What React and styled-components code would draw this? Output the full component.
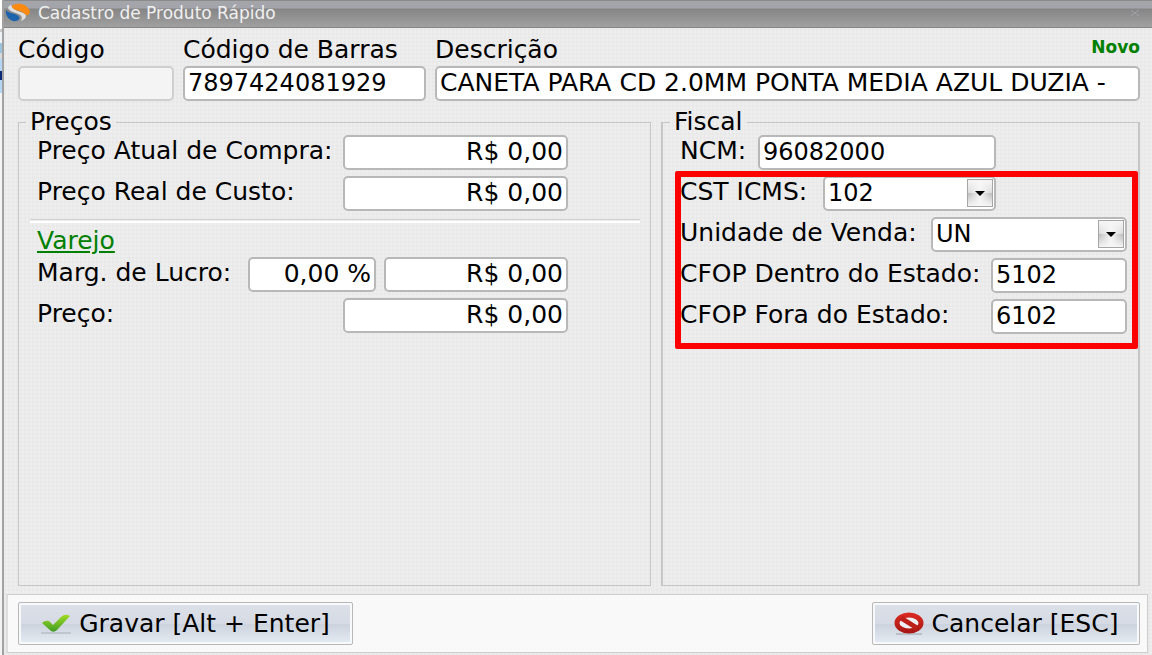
import React from "react";
import styled, { createGlobalStyle } from "styled-components";

const GlobalStyle = createGlobalStyle`
  *, *::before, *::after { box-sizing: border-box; }
  body { margin: 0; background: #ededed; }
  body, input, select, button {
    font-family: "DejaVu Sans", Verdana, sans-serif;
    font-size: 25px;
    line-height: 28px;
    color: #000;
  }
`;

const Desktop = styled.div`
  min-height: 100vh;
  display: flex;
  padding-left: 2px;
  background: linear-gradient(#fff 0 29px, #c8c8c8 29px 32px, #eef2f5 32px 43px, #9cc3dc 43px 53px,
    #d8d8d8 53px 59px, #b5d6f5 59px 71px, #0a2a78 71px 80px, #b5d6f5 80px 93px, #f4f4f4 93px);
`;

const Window = styled.main`
  flex: 1;
  min-width: 0;
  display: flex;
  flex-direction: column;
  border-left: 2px solid #a2a2a2;
  background-color: #eeeeee;
  background-image: repeating-linear-gradient(0deg, rgba(0, 0, 0, 0.012) 0 2px, transparent 2px 4px),
    repeating-linear-gradient(90deg, rgba(0, 0, 0, 0.012) 0 2px, transparent 2px 4px);
`;

const TitleBar = styled.header`
  height: 28px;
  display: flex;
  align-items: center;
  gap: 8px;
  padding: 0 12px 2px 1px;
  border-top: 1px solid #8b8b8b;
  border-bottom: 1px solid #858585;
  background: linear-gradient(#a4a5ab 0 7px, #858585 8px, #a0a0a0);
`;

const Title = styled.h1`
  flex: 1;
  margin: 0;
  font-size: 17px;
  line-height: 20px;
  font-weight: 400;
  color: #f0f0f0;
`;

const CloseButton = styled.button`
  display: flex;
  padding: 0;
  border: 0;
  background: none;
`;

const Form = styled.form`
  flex: 1;
  display: flex;
  flex-direction: column;
`;

const Identification = styled.section`
  display: grid;
  grid-template-columns: 156px 243px 1fr;
  gap: 9px;
  padding: 8px 12px 0 14px;
`;

const Field = styled.div`
  min-width: 0;
  display: flex;
  flex-direction: column;
  gap: 2px;
`;

const FieldHead = styled.div`
  display: flex;
  justify-content: space-between;
`;

const Label = styled.label`
  white-space: nowrap;
`;

const Status = styled.strong`
  font-size: 17px;
  line-height: 22px;
  color: #008000;
`;

const TextBox = styled.input`
  flex: none;
  width: ${(p) => (p.$width ? `${p.$width}px` : "100%")};
  height: 35px;
  padding: 0 3px 2px;
  border: 2px solid #b8b8b8;
  border-radius: 5px;
  background: #fff;
  text-align: ${(p) => p.$align || "left"};
  outline: none;

  &:disabled {
    border-color: #cfcfcf;
    background: #f4f4f4;
  }
`;

const CodeBox = styled(TextBox)`
  font-size: 24px;
`;

const Groups = styled.div`
  flex: 1;
  display: grid;
  grid-template-columns: 633fr 479fr;
  gap: 10px;
  padding: 11px 12px 8px 14px;
`;

const Group = styled.fieldset`
  min-width: 0;
  margin: 0;
  padding: 3px 0 0;
  border: 1px solid #c6c6c6;
  border-right-width: ${(p) => (p.$heavy ? 2 : 1)}px;
  border-left-width: ${(p) => (p.$heavy ? 2 : 1)}px;
`;

const Legend = styled.legend`
  margin-left: 7px;
  padding: 0 4px;
  line-height: 20px;
`;

const Rows = styled.div`
  position: relative;
  display: flex;
  flex-direction: column;
  gap: 6px;
  padding-left: ${(p) => p.$indent}px;
`;

const Row = styled.div`
  width: ${(p) => p.$width}px;
  max-width: 100%;
  display: flex;
  align-items: center;
  justify-content: space-between;

  > ${Label} {
    padding-bottom: 4px;
  }
`;

const Divider = styled.hr`
  height: 4px;
  margin: 8px 10px 5px 11px;
  border: 0;
  border-top: 1px solid #d2d2d2;
  border-bottom: 2px solid #fff;
`;

const Retail = styled.a`
  display: block;
  width: max-content;
  margin: 0 0 3px 18px;
  line-height: 26px;
  color: #008000;
  text-decoration-thickness: 2px;
  text-underline-offset: 2px;
`;

const Highlighted = styled(Rows)`
  margin-top: 6px;

  &::after {
    content: "";
    position: absolute;
    inset: -5px 0 -15px 12px;
    border: 6px solid #fe0000;
    border-radius: 2px;
    pointer-events: none;
  }
`;

const SelectFrame = styled.div`
  position: relative;
  flex: none;
  width: ${(p) => p.$width}px;
`;

const SelectBox = styled.select`
  display: block;
  width: 100%;
  height: 35px;
  padding: 0 32px 2px 3px;
  border: 2px solid #b8b8b8;
  border-radius: 5px;
  background: #fff;
  font-size: 24px;
  appearance: none;
  outline: none;
`;

const DropButton = styled.span`
  position: absolute;
  top: 3px;
  right: 3px;
  width: 26px;
  height: 28px;
  display: grid;
  place-items: center;
  border: 1px solid #a6a6a6;
  background: linear-gradient(90deg, rgba(255, 255, 255, 0), #f6f6f6 50%, rgba(255, 255, 255, 0)),
    linear-gradient(#f6f6f6, #dcdcdc 48%, #bcbcbc 52%, #f4f4f4);
  pointer-events: none;
`;

const Footer = styled.footer`
  display: flex;
  justify-content: space-between;
  margin: 0 4px 2px 2px;
  padding: 7px 7px 7px 10px;
  border: 1px solid #cecece;
  border-left: 2px solid #dedede;
  background: #f9f9f9;
`;

const Action = styled.button`
  width: ${(p) => p.$width}px;
  height: 43px;
  display: flex;
  align-items: center;
  justify-content: center;
  gap: 8px;
  padding: 0;
  border: 1px solid #b8b8b8;
  border-radius: 2px;
  background: linear-gradient(#dce1e9, #d5dae4 50%, #ccd3de 52%, #e6ecf2);
  box-shadow: inset 0 0 0 2px #f7f9fb;
  white-space: nowrap;
`;

const AppLogo = () => (
  <svg width="25" height="22" viewBox="0 0 25 22" aria-hidden="true">
    <path d="M1 8C3 11 8 11 12 13C16 15 15 18 11 19C6 20 0 15 1 8Z" fill="#1d63ae" />
    <path d="M6 3C1 5 3 8 8 10C14 12 19 13 16 19C21 17 22 14 20 12C16 9 8 9 6 3Z" fill="#dedede" />
    <path d="M8 3C14 0 22 2 25 9C25 12 23 14 21 13C18 9 12 9 9 7C7 6 6 4 8 3Z" fill="#fb8a12" />
  </svg>
);

const CheckIcon = () => (
  <svg width="30" height="22" viewBox="0 0 30 22" aria-hidden="true">
    <defs>
      <linearGradient id="check" x2="0" y2="1">
        <stop stopColor="#a2dc24" />
        <stop offset="1" stopColor="#3f9b24" />
      </linearGradient>
    </defs>
    <path d="M0 20H30" stroke="#a9aeb4" />
    <path d="M1 10Q4 7 8 8L12 12L20 4Q24 0 29 3L16 17Q13 20 10 18Z" fill="url(#check)" />
  </svg>
);

const CancelIcon = () => (
  <svg width="30" height="24" viewBox="0 0 30 24" aria-hidden="true">
    <defs>
      <linearGradient id="cancel" gradientUnits="userSpaceOnUse" x1="0" y1="1" x2="0" y2="22">
        <stop stopColor="#dc2a22" />
        <stop offset="1" stopColor="#a31512" />
      </linearGradient>
    </defs>
    <path d="M2 22H28" stroke="#bbc0c8" strokeWidth="2" />
    <ellipse cx="15" cy="11" rx="12" ry="8" fill="#eef0f4" stroke="url(#cancel)" strokeWidth="5" />
    <path d="M7 6L23 16" stroke="#bd1f1a" strokeWidth="5" />
  </svg>
);

const Money = ({ id, label, width }) => (
  <TextBox id={id} aria-label={label} $width={width} $align="right" defaultValue="R$ 0,00" />
);

const Select = ({ id, width, value }) => (
  <SelectFrame $width={width}>
    <SelectBox id={id} defaultValue={value}>
      <option>{value}</option>
    </SelectBox>
    <DropButton>
      <svg width="10" height="5" viewBox="0 0 10 5" aria-hidden="true">
        <path d="M0 0H10L5 5Z" fill="#000" />
      </svg>
    </DropButton>
  </SelectFrame>
);

export default function App() {
  return (
    <Desktop>
      <GlobalStyle />
      <Window>
        <TitleBar>
          <AppLogo />
          <Title>Cadastro de Produto Rápido</Title>
          <CloseButton type="button" aria-label="Fechar">
            <svg width="10" height="8" viewBox="0 0 10 8" aria-hidden="true">
              <path d="M1 1L9 7M9 1L1 7" stroke="#a2a2a8" />
            </svg>
          </CloseButton>
        </TitleBar>
        <Form onSubmit={(e) => e.preventDefault()}>
          <Identification>
            <Field>
              <Label htmlFor="codigo">Código</Label>
              <TextBox id="codigo" disabled />
            </Field>
            <Field>
              <Label htmlFor="barras">Código de Barras</Label>
              <CodeBox id="barras" defaultValue="7897424081929" />
            </Field>
            <Field>
              <FieldHead>
                <Label htmlFor="descricao">Descrição</Label>
                <Status>Novo</Status>
              </FieldHead>
              <TextBox id="descricao" defaultValue="CANETA PARA CD 2.0MM PONTA MEDIA AZUL DUZIA -" />
            </Field>
          </Identification>

          <Groups>
            <Group>
              <Legend>Preços</Legend>
              <Rows $indent={18}>
                <Row $width={531}>
                  <Label htmlFor="compra">Preço Atual de Compra:</Label>
                  <Money id="compra" width={225} />
                </Row>
                <Row $width={531}>
                  <Label htmlFor="custo">Preço Real de Custo:</Label>
                  <Money id="custo" width={225} />
                </Row>
              </Rows>
              <Divider />
              <Retail href="#varejo">Varejo</Retail>
              <Rows $indent={18}>
                <Row $width={531}>
                  <Label htmlFor="margem">Marg. de Lucro:</Label>
                  <Row $width={320}>
                    <TextBox id="margem" $width={128} $align="right" defaultValue="0,00 %" />
                    <Money label="Valor do lucro" width={184} />
                  </Row>
                </Row>
                <Row $width={531}>
                  <Label htmlFor="preco">Preço:</Label>
                  <Money id="preco" width={225} />
                </Row>
              </Rows>
            </Group>

            <Group $heavy>
              <Legend>Fiscal</Legend>
              <Rows $indent={17}>
                <Row $width={316}>
                  <Label htmlFor="ncm">NCM:</Label>
                  <CodeBox id="ncm" $width={238} defaultValue="96082000" />
                </Row>
              </Rows>
              <Highlighted $indent={17}>
                <Row $width={316}>
                  <Label htmlFor="cst">CST ICMS:</Label>
                  <Select id="cst" width={173} value="102" />
                </Row>
                <Row $width={447}>
                  <Label htmlFor="unidade">Unidade de Venda:</Label>
                  <Select id="unidade" width={196} value="UN" />
                </Row>
                <Row $width={447}>
                  <Label htmlFor="dentro">CFOP Dentro do Estado:</Label>
                  <CodeBox id="dentro" $width={136} defaultValue="5102" />
                </Row>
                <Row $width={447}>
                  <Label htmlFor="fora">CFOP Fora do Estado:</Label>
                  <CodeBox id="fora" $width={136} defaultValue="6102" />
                </Row>
              </Highlighted>
            </Group>
          </Groups>

          <Footer>
            <Action type="submit" $width={335}>
              <CheckIcon />
              Gravar [Alt + Enter]
            </Action>
            <Action type="button" $width={268}>
              <CancelIcon />
              Cancelar [ESC]
            </Action>
          </Footer>
        </Form>
      </Window>
    </Desktop>
  );
}
